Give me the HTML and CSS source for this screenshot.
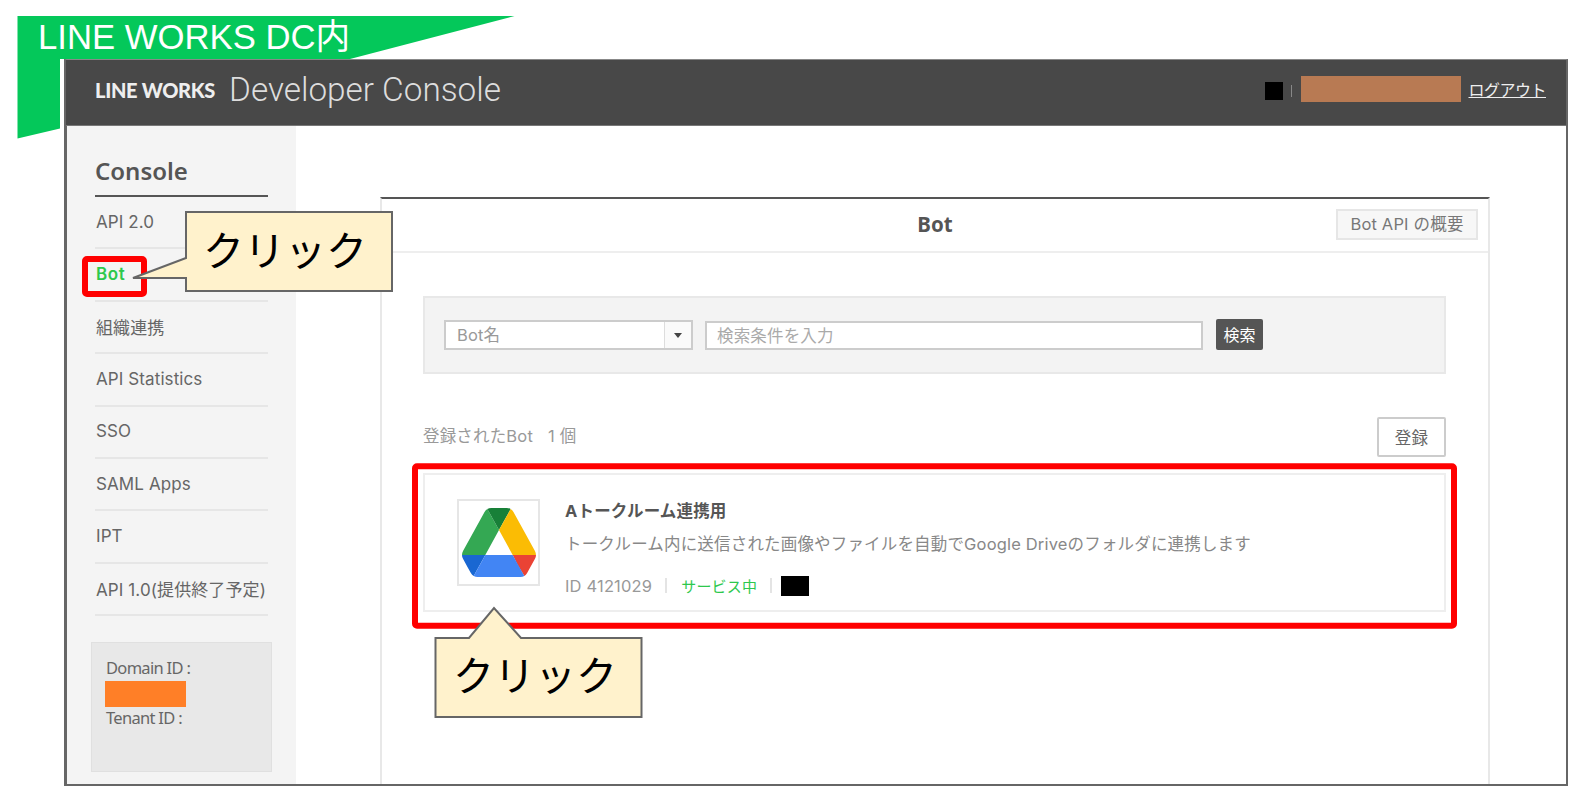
FILE: index.html
```html
<!DOCTYPE html>
<html lang="ja">
<head>
<meta charset="utf-8">
<title>LINE WORKS Developer Console</title>
<link rel="stylesheet" href="styles.css">
</head>
<body>
<svg class="banner-shape" width="1589" height="805" viewBox="0 0 1589 805" aria-hidden="true">
  <polygon points="17.5,16 514.5,16 350,59 60,59 60,128.5 17.5,138.5" fill="#04c85a"/>
</svg>
<div class="banner-text">LINE WORKS DC内</div>

<div class="window">
  <header class="topbar">
    <div class="brand">
      <span class="logo">LINE WORKS</span>
      <span class="product">Developer Console</span>
    </div>
    <div class="account">
      <span class="mask-black"></span>
      <span class="bar-sep"></span>
      <span class="mask-brown"></span>
      <a class="logout">ログアウト</a>
    </div>
  </header>
  <div class="body-row">
    <aside class="sidebar">
      <h2 class="side-title">Console</h2>
      <ul class="side-menu">
        <li>API 2.0</li>
        <li class="active">Bot</li>
        <li>組織連携</li>
        <li>API Statistics</li>
        <li>SSO</li>
        <li>SAML Apps</li>
        <li>IPT</li>
        <li>API 1.0(提供終了予定)</li>
      </ul>
      <div class="domain-box">
        <div class="domain-line">Domain ID :</div>
        <div class="mask-orange"></div>
        <div class="domain-line">Tenant ID :</div>
      </div>
    </aside>
    <main class="main">
      <section class="panel">
        <div class="panel-head">
          <h3 class="panel-title">Bot</h3>
          <span class="overview">Bot API の概要</span>
        </div>
        <div class="panel-body">
          <div class="search">
            <div class="select">
              <span class="select-value">Bot名</span>
              <span class="select-arrow"><svg width="8" height="5" viewBox="0 0 8 5"><path d="M0 0h8L4 5z" fill="#444"/></svg></span>
            </div>
            <div class="input">検索条件を入力</div>
            <div class="search-btn">検索</div>
          </div>
          <div class="count-row">
            <span class="count">登録されたBot<span class="count-num">1 個</span></span>
            <span class="register">登録</span>
          </div>
          <article class="card">
            <div class="bot-icon">
              <svg class="drive" viewBox="0 0 87.3 78" preserveAspectRatio="none">
                <path d="m6.6 66.85 3.85 6.65c.8 1.4 1.95 2.5 3.3 3.3l13.75-23.8h-27.5c0 1.55.4 3.1 1.2 4.5z" fill="#1967d2"/>
                <path d="m43.65 25-13.75-23.8c-1.35.8-2.5 1.9-3.3 3.3l-25.4 44a9.06 9.06 0 0 0 -1.2 4.5h27.5z" fill="#34a853"/>
                <path d="m73.55 76.8c1.35-.8 2.5-1.9 3.3-3.3l1.6-2.75 7.65-13.25c.8-1.4 1.2-2.95 1.2-4.5h-27.502l5.852 11.5z" fill="#ea4335"/>
                <path d="m43.65 25 13.75-23.8c-1.35-.8-2.9-1.2-4.5-1.2h-18.5c-1.6 0-3.15.45-4.5 1.2z" fill="#188038"/>
                <path d="m59.8 53h-32.3l-13.75 23.8c1.35.8 2.9 1.2 4.5 1.2h50.8c1.6 0 3.15-.45 4.5-1.2z" fill="#4285f4"/>
                <path d="m73.4 26.5-12.7-22c-.8-1.4-1.95-2.5-3.3-3.3l-13.75 23.8 16.15 28h27.45c0-1.55-.4-3.1-1.2-4.5z" fill="#fbbc04"/>
              </svg>
            </div>
            <div class="bot-info">
              <div class="bot-name">Aトークルーム連携用</div>
              <div class="bot-desc">トークルーム内に送信された画像やファイルを自動でGoogle Driveのフォルダに連携します</div>
              <div class="bot-meta">
                <span>ID 4121029</span>
                <span class="meta-sep"></span>
                <span class="status">サービス中</span>
                <span class="meta-sep"></span>
                <span class="mask-owner"></span>
              </div>
            </div>
          </article>
        </div>
      </section>
    </main>
  </div>
</div>

<svg class="annotations" width="1589" height="805" viewBox="0 0 1589 805" aria-hidden="true">
  <rect x="85" y="259" width="59" height="35" rx="2" fill="none" stroke="#ff0000" stroke-width="6"/>
  <rect x="415" y="466.3" width="1039" height="159.5" rx="2" fill="none" stroke="#ff0000" stroke-width="6"/>
  <polygon points="186,212 392,212 392,291 186,291 186,278 133,278 186,258" fill="#fff2cc" stroke="#666" stroke-width="2"/>
  <polygon points="435.5,638 469,638 494,608 521,638 641.5,638 641.5,717 435.5,717" fill="#fff2cc" stroke="#666" stroke-width="2"/>
</svg>
<div class="click-label click-one">クリック</div>
<div class="click-label click-two">クリック</div>
</body>
</html>
```
FILE: styles.css
```css
* { box-sizing: border-box; }
html, body { margin: 0; padding: 0; }
body {
  width: 1589px;
  height: 805px;
  overflow: hidden;
  background: #fff;
  font-family: "Inter", "Noto Sans CJK JP", sans-serif;
  font-size: 16.5px;
  letter-spacing: 0.17px;
  color: #666;
  padding: 59px 0 0 64px;
}
.banner-shape, .annotations {
  position: absolute;
  left: 0;
  top: 0;
}
.annotations { pointer-events: none; }
.banner-text {
  position: absolute;
  left: 38px;
  top: 15px;
  font-family: "Liberation Sans", "Noto Sans CJK JP", sans-serif;
  font-size: 34.7px;
  line-height: 44px;
  letter-spacing: 0;
  color: #fff;
  white-space: nowrap;
}
.click-label {
  position: absolute;
  font-family: "Noto Sans CJK JP", sans-serif;
  font-size: 41px;
  line-height: 50px;
  letter-spacing: 0;
  color: #000;
  white-space: nowrap;
}
.click-one { left: 203px; top: 223px; }
.click-two { left: 453px; top: 648px; }

.window {
  position: relative;
  width: 1504px;
  height: 727px;
  border: 2px solid #666;
  border-left-width: 3px;
  border-top: 1px solid #888;
  background: #fff;
  display: flex;
  flex-direction: column;
}
.topbar {
  height: 66px;
  margin-left: -1px;
  background: #484848;
  border-bottom: 1px solid #777;
  display: flex;
  align-items: center;
  justify-content: space-between;
  padding: 0 20px 0 29px;
}
.brand { display: flex; align-items: center; gap: 14px; margin-top: -6px; }
.logo {
  font-family: "Lato", sans-serif;
  font-weight: 900;
  font-size: 20px;
  letter-spacing: -0.3px;
  color: #eee;
}
.product {
  font-family: "Roboto", sans-serif;
  font-weight: 300;
  font-size: 33.3px;
  line-height: 40px;
  letter-spacing: 0;
  color: #ddd;
  white-space: nowrap;
}
.account { display: flex; align-items: center; margin-top: -8px; }
.mask-black { width: 18px; height: 18px; margin-top: 5px; background: #000; }
.bar-sep { width: 1px; height: 12px; margin: 5px 9px 0 8px; background: #888; }
.mask-brown { width: 160px; height: 26px; background: #b87a53; }
.logout {
  margin: 1px 0 0 7px;
  font-family: "Noto Sans CJK JP", sans-serif;
  font-size: 16px;
  letter-spacing: -0.5px;
  color: #eee;
  text-decoration: underline;
  white-space: nowrap;
}

.body-row { flex: 1; display: flex; min-height: 0; }
.sidebar {
  width: 229px;
  background: #f4f4f4;
  padding: 0 28px 0 28px;
  display: flex;
  flex-direction: column;
  flex: none;
}
.side-title {
  margin: 0;
  height: 71px;
  padding-top: 28px;
  border-bottom: 2px solid #555;
  font-family: "Noto Sans", sans-serif;
  font-size: 24px;
  line-height: 34px;
  letter-spacing: 0;
  font-weight: 600;
  color: #555;
}
.side-menu { list-style: none; margin: 0; padding: 0; }
.side-menu li {
  height: 52.4px;
  border-bottom: 2px solid #e6e6e6;
  padding: 0 0 1px 1px;
  display: flex;
  align-items: center;
  font-size: 17px;
  letter-spacing: 0.1px;
  color: #666;
  white-space: nowrap;
}
.side-menu li.active { color: #2dc84d; font-weight: 600; letter-spacing: 0.6px; }
.domain-box {
  margin: 26px -4px 0 -4px;
  height: 130px;
  background: #e8e8e8;
  border: 1px solid #e0e0e0;
  padding: 13px 0 0 14px;
}
.domain-line {
  font-family: "Noto Sans", sans-serif;
  line-height: 24px;
  letter-spacing: -0.7px;
  color: #666;
}
.mask-orange { width: 81px; height: 26px; margin: 1px 0 -1px -1px; background: #ff7f27; }

.main { flex: 1; padding: 71px 76px 0 84px; min-width: 0; }
.panel {
  height: 100%;
  border-top: 2px solid #555;
  border-left: 2px solid #e8e8e8;
  border-right: 2px solid #e8e8e8;
}
.panel-head {
  height: 54px;
  border-bottom: 2px solid #eee;
  display: grid;
  grid-template-columns: 1fr auto 1fr;
  align-items: center;
  padding: 0 10px 2px;
}
.panel-title {
  grid-column: 2;
  margin: 0;
  font-family: "Noto Sans", sans-serif;
  font-size: 20.5px;
  letter-spacing: 0;
  font-weight: 700;
  color: #555;
}
.overview {
  grid-column: 3;
  justify-self: end;
  width: 142px;
  height: 31px;
  padding-bottom: 2px;
  background: #f7f7f7;
  border: 2px solid #e6e6e6;
  display: flex;
  align-items: center;
  justify-content: center;
  color: #777;
  white-space: nowrap;
}
.panel-body { padding: 43px 42px 0 41px; }
.search {
  height: 78px;
  background: #f3f3f3;
  border: 2px solid #e8e8e8;
  padding-left: 19px;
  display: flex;
  align-items: center;
}
.select {
  width: 249px;
  height: 30px;
  background: #fff;
  border: 2px solid #ccc;
  display: flex;
  align-items: center;
  justify-content: space-between;
  color: #999;
}
.select-value { padding-left: 11px; margin-top: -2px; }
.select-arrow {
  width: 27px;
  height: 100%;
  border-left: 1px solid #ddd;
  background: #fafafa;
  display: flex;
  align-items: center;
  justify-content: center;
}
.input {
  width: 498px;
  height: 29px;
  margin-left: 12px;
  background: #fff;
  border: 2px solid #ccc;
  padding: 0 0 1px 10px;
  display: flex;
  align-items: center;
  color: #aaa;
}
.search-btn {
  width: 47px;
  height: 31px;
  margin: -1px 0 0 13px;
  padding-bottom: 2px;
  background: #555;
  border-radius: 2px;
  color: #fff;
  display: flex;
  align-items: center;
  justify-content: center;
  font-size: 16px;
  letter-spacing: 0;
}
.count-row {
  margin-top: 43px;
  height: 40px;
  display: flex;
  align-items: center;
  justify-content: space-between;
}
.count { color: #999; margin-top: -4px; }
.count-num { margin-left: 15px; }
.register {
  width: 69px;
  height: 40px;
  background: #fff;
  border: 2px solid #ccc;
  border-radius: 2px;
  display: flex;
  align-items: center;
  justify-content: center;
  color: #666;
}
.card {
  margin-top: 16px;
  height: 139px;
  border: 2px solid #eee;
  display: flex;
  padding: 24px 0 0 32px;
}
.bot-icon {
  width: 83px;
  height: 87px;
  border: 2px solid #e6e6e6;
  display: flex;
  align-items: center;
  justify-content: center;
  flex: none;
}
.drive { width: 74px; height: 69px; display: block; }
.bot-info { margin-left: 25px; display: flex; flex-direction: column; }
.bot-name { font-weight: 700; color: #555; line-height: 24px; white-space: nowrap; }
.bot-desc { color: #888; line-height: 24px; margin-top: 9px; white-space: nowrap; }
.bot-meta { display: flex; align-items: center; margin-top: 19px; color: #999; white-space: nowrap; }
.meta-sep { width: 2px; height: 15px; background: #e4e4e4; margin: 0 9px 0 13px; }
.status { color: #2dc84d; font-size: 15px; margin-left: 5px; }
.mask-owner { width: 28px; height: 20px; background: #000; }
```
